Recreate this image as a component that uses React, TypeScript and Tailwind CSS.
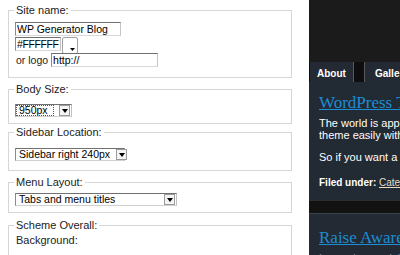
import React from "react";

const field = "border border-[#d6d6d6] ml-[8px] w-[284px] px-[6px]";
const legend = "px-[2px] -ml-[1px] text-[11px] leading-[13px] text-[#222]";
const textInput =
  "h-[14px] bg-white border border-t-[#6f6f6f] border-l-[#8a8a8a] border-r-[#c4c4c4] border-b-[#d8d8d8] text-[10.5px] leading-[12px] pl-[1px] text-black outline-none";

const Arrow = () => (
  <div className="ml-auto mr-[1px] w-[11px] h-[11px] shrink-0 border border-[#9a9a9a] bg-[#f4f4f4] flex items-center justify-center">
    <svg width="6" height="4" viewBox="0 0 6 4">
      <path d="M0 0h6L3 4z" fill="#000" />
    </svg>
  </div>
);

const Select = ({ value, width, dotted }: { value: string; width: string; dotted?: boolean }) => (
  <div className={`${width} h-[13px] flex items-center bg-white border border-t-[#707070] border-l-[#8a8a8a] border-r-[#c0c0c0] border-b-[#d0d0d0]`}>
    <span
      className={`whitespace-nowrap text-[10.5px] leading-[11px] pl-[3px] pr-[6px] text-black ${dotted ? "outline-1 outline-dotted outline-[#555] -outline-offset-1 h-[11px] flex items-center" : ""}`}
    >
      {value}
    </span>
    <Arrow />
  </div>
);

export default function App() {
  return (
    <div className="w-[400px] h-[255px] overflow-hidden flex bg-white font-['Liberation_Sans',Arial,sans-serif]">
      {/* settings form */}
      <div className="w-[309px] shrink-0 pt-[4px]">
        <fieldset className={`${field} pt-[5px] pb-[10px]`}>
          <legend className={legend}>Site name:</legend>
          <input readOnly defaultValue="WP Generator Blog" className={`${textInput} w-[106px] block`} />
          <div className="flex items-start mt-[1px]">
            <input readOnly defaultValue="#FFFFFF" className={`${textInput} w-[46px] tracking-[-0.4px]`} />
            <div className="ml-[1px] w-[16px] h-[17px] bg-white border border-[#a0a0a0] rounded-[2px] flex items-end justify-end pr-[2px] pb-[2px]">
              <svg width="5" height="3" viewBox="0 0 5 3">
                <path d="M0 0h5L2.5 3z" fill="#000" />
              </svg>
            </div>
          </div>
          <div className="flex items-center -mt-[1px]">
            <span className="text-[10.5px] leading-[14px] text-[#222] pl-[1px]">or logo</span>
            <input readOnly defaultValue="http://" className={`${textInput} w-[107px] ml-[3px]`} />
          </div>
        </fieldset>

        <fieldset className={`${field} mt-[5px] pt-[8px] pb-[6px]`}>
          <legend className={legend}>Body Size:</legend>
          <Select value="950px" width="w-[57px]" dotted />
        </fieldset>

        <fieldset className={`${field} mt-[2px] pt-[9px] pb-[9px]`}>
          <legend className={legend}>Sidebar Location:</legend>
          <Select value="Sidebar right 240px" width="w-[110px]" />
        </fieldset>

        <fieldset className={`${field} mt-[5px] pt-[4px] pb-[6px]`}>
          <legend className={legend}>Menu Layout:</legend>
          <Select value="Tabs and menu titles" width="w-[162px]" />
        </fieldset>

        <fieldset className={`${field} mt-[6px] pt-[2px] pb-[10px]`}>
          <legend className={legend}>Scheme Overall:</legend>
          <div className="text-[11px] leading-[13px] text-[#222] pl-[1px]">Background:</div>
        </fieldset>
      </div>

      {/* theme preview */}
      <div className="flex-1 flex flex-col bg-[#1b1b1b] min-w-0">
        <div className="h-[62px] shrink-0" />
        <div className="h-[20px] shrink-0 flex bg-[#0e0e0e] pl-[1px]">
          <div className="w-[44px] bg-[#232a33] border-r border-[#5a5a5a] text-white font-bold text-[10px] pl-[7px] pt-[6px] leading-[12px]">
            About
          </div>
          <div className="w-[10px]" />
          <div className="flex-1 bg-[#232a33] border-l border-[#5a5a5a] text-white font-bold text-[10px] pl-[10px] pt-[6px] leading-[12px] whitespace-nowrap overflow-hidden">
            Gallery
          </div>
        </div>
        <div className="h-[118px] shrink-0 bg-[#222a33] pl-[10px] pt-[11px] whitespace-nowrap overflow-hidden">
          <div className="font-['Liberation_Serif',serif] text-[17px] leading-[20px] text-[#1b8ed6] underline">
            WordPress Themes
          </div>
          <p className="mt-[4px] text-[11px] leading-[12px] text-white">
            The world is applauding
            <br />
            theme easily with
          </p>
          <p className="mt-[10px] text-[11px] leading-[12px] text-white">So if you want a</p>
          <p className="mt-[14px] text-[10px] leading-[12px] text-white font-bold">
            Filed under: <span className="text-[#eadcc2] underline font-normal">Category</span>
          </p>
        </div>
        <div className="h-[13px] shrink-0 bg-[#121212] border-t border-[#2e2e2e]" />
        <div className="flex-1 bg-[#232a33] border-t border-[#3a424c] pl-[10px] pt-[14px] whitespace-nowrap overflow-hidden">
          <div className="font-['Liberation_Serif',serif] text-[17px] leading-[20px] text-[#1b8ed6] underline">
            Raise Awareness
          </div>
          <p className="mt-[4px] text-[11px] leading-[12px] text-[#8a9099]">Lorem ipsum dolor</p>
        </div>
      </div>
    </div>
  );
}
